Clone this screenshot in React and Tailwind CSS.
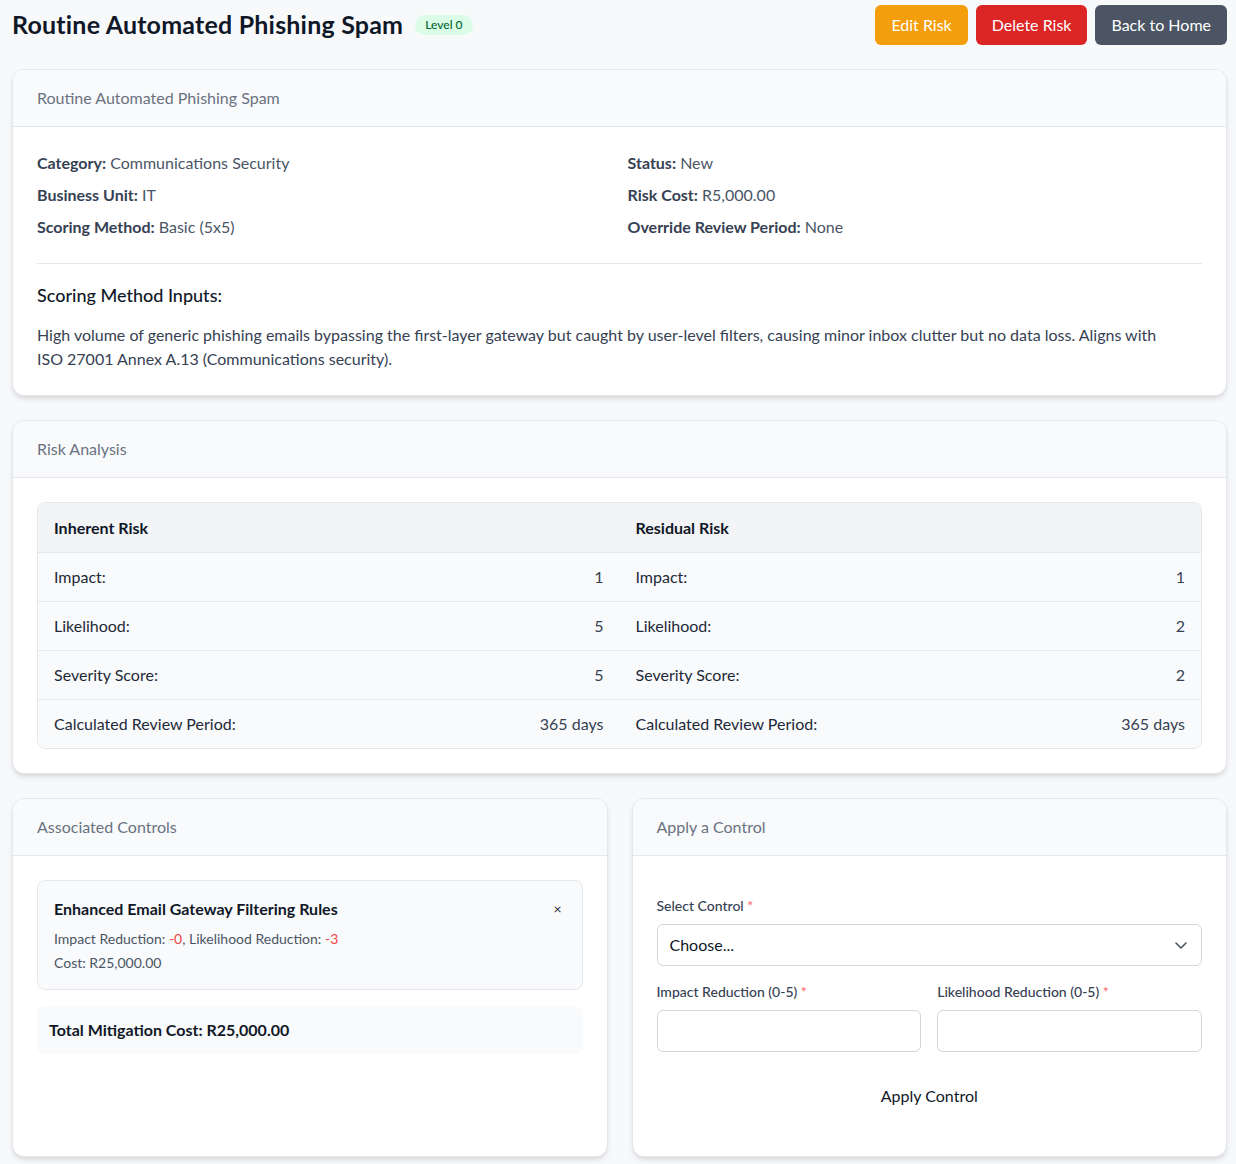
import React from 'react';

const Card = ({ title, children, className = '' }) => (
  <div className={`bg-white rounded-xl border border-gray-200 shadow-md overflow-hidden ${className}`}>
    <div className="h-[57px] px-6 flex items-center bg-gray-50 border-b border-gray-200 text-gray-500">
      {title}
    </div>
    {children}
  </div>
);

const Field = ({ label, value }) => (
  <p className="h-8 flex items-center text-gray-600">
    <span className="font-bold text-gray-700">{label}:</span>&nbsp;{value}
  </p>
);

const RiskRow = ({ cells, head }) => (
  <div className={`grid grid-cols-2 h-[49px] ${head ? 'bg-gray-100 font-bold text-gray-900' : 'bg-gray-50 border-t border-gray-200 text-gray-800'}`}>
    {cells.map(([label, value], i) => (
      <div key={i} className="flex items-center justify-between px-4">
        <span>{label}</span>
        <span className="text-gray-700">{value}</span>
      </div>
    ))}
  </div>
);

export default function App() {
  const rows = [
    [['Impact:', '1'], ['Impact:', '1']],
    [['Likelihood:', '5'], ['Likelihood:', '2']],
    [['Severity Score:', '5'], ['Severity Score:', '2']],
    [['Calculated Review Period:', '365 days'], ['Calculated Review Period:', '365 days']],
  ];

  return (
    <div className="min-h-screen bg-[#f8f9fb] pl-3 pr-[9px] pb-2 text-base text-gray-800" style={{ fontFamily: 'Lato, sans-serif' }}>
      {/* Header */}
      <div className="h-[52px] flex items-center justify-between pb-[2px]">
        <div className="flex items-center gap-3">
          <h1 className="text-[25px] font-bold text-gray-900 tracking-[0.2px]">Routine Automated Phishing Spam</h1>
          <span className="text-xs px-2.5 py-0.5 rounded-full bg-green-100 text-green-800 font-medium">Level 0</span>
        </div>
        <div className="flex gap-2">
          <button className="h-10 px-4 rounded-md bg-[#f59e0b] text-white">Edit Risk</button>
          <button className="h-10 px-4 rounded-md bg-[#dc2626] text-white">Delete Risk</button>
          <button className="h-10 px-4 rounded-md bg-[#4b5563] text-white">Back to Home</button>
        </div>
      </div>

      <div className="mt-[17px] flex flex-col gap-6">
        {/* Details */}
        <Card title="Routine Automated Phishing Spam">
          <div className="p-6 pt-5">
            <div className="grid grid-cols-2 gap-x-4">
              <div>
                <Field label="Category" value="Communications Security" />
                <Field label="Business Unit" value="IT" />
                <Field label="Scoring Method" value="Basic (5x5)" />
              </div>
              <div>
                <Field label="Status" value="New" />
                <Field label="Risk Cost" value="R5,000.00" />
                <Field label="Override Review Period" value="None" />
              </div>
            </div>
            <hr className="mt-5 mb-[17px] border-gray-200" />
            <h2 className="text-lg font-medium text-gray-900 mb-[14px]">Scoring Method Inputs:</h2>
            <p className="text-gray-700 leading-6 max-w-[1130px]">
              High volume of generic phishing emails bypassing the first-layer gateway but caught by user-level filters, causing minor inbox clutter but no data loss. Aligns with ISO 27001 Annex A.13 (Communications security).
            </p>
          </div>
        </Card>

        {/* Risk Analysis */}
        <Card title="Risk Analysis">
          <div className="p-6">
            <div className="rounded-lg border border-gray-200 overflow-hidden">
              <RiskRow head cells={[['Inherent Risk', ''], ['Residual Risk', '']]} />
              {rows.map((r, i) => <RiskRow key={i} cells={r} />)}
            </div>
          </div>
        </Card>

        <div className="grid grid-cols-2 gap-6">
          {/* Associated Controls */}
          <Card title="Associated Controls" className="h-[359px]">
            <div className="p-6">
              <div className="rounded-lg border border-gray-200 bg-gray-50 px-4 pt-4 pb-[14px]">
                <div className="flex items-center justify-between">
                  <h3 className="font-bold text-gray-900">Enhanced Email Gateway Filtering Rules</h3>
                  <span className="text-sm text-gray-800 mr-1">×</span>
                </div>
                <p className="text-sm text-gray-600 mt-1.5 leading-6">
                  Impact Reduction: <span className="text-[#ef4444]">-0</span>, Likelihood Reduction: <span className="text-[#ef4444]">-3</span>
                </p>
                <p className="text-sm text-gray-600 leading-6">Cost: R25,000.00</p>
              </div>
              <div className="mt-4 rounded-lg bg-gray-50 h-12 px-3 flex items-center font-bold text-gray-900">
                Total Mitigation Cost: R25,000.00
              </div>
            </div>
          </Card>

          {/* Apply a Control */}
          <Card title="Apply a Control" className="h-[359px]">
            <div className="px-6 pt-[40px]">
              <label className="block text-sm font-medium text-gray-700 mb-2">
                Select Control <span className="text-red-400">*</span>
              </label>
              <div className="h-[42px] rounded-md border border-gray-300 flex items-center justify-between px-3 text-gray-900">
                <span>Choose...</span>
                <svg width="16" height="16" viewBox="0 0 16 16" fill="none" stroke="#4b5563" strokeWidth="1.6" strokeLinecap="round" strokeLinejoin="round">
                  <path d="M3 6l5 5 5-5" />
                </svg>
              </div>
              <div className="grid grid-cols-2 gap-4 mt-4">
                <div>
                  <label className="block text-sm font-medium text-gray-700 mb-2">
                    Impact Reduction (0-5) <span className="text-red-400">*</span>
                  </label>
                  <div className="h-[42px] rounded-md border border-gray-300" />
                </div>
                <div>
                  <label className="block text-sm font-medium text-gray-700 mb-2">
                    Likelihood Reduction (0-5) <span className="text-red-400">*</span>
                  </label>
                  <div className="h-[42px] rounded-md border border-gray-300" />
                </div>
              </div>
              <div className="mt-6 flex justify-center">
                <button className="h-10 px-4 text-gray-900">Apply Control</button>
              </div>
            </div>
          </Card>
        </div>
      </div>
    </div>
  );
}
